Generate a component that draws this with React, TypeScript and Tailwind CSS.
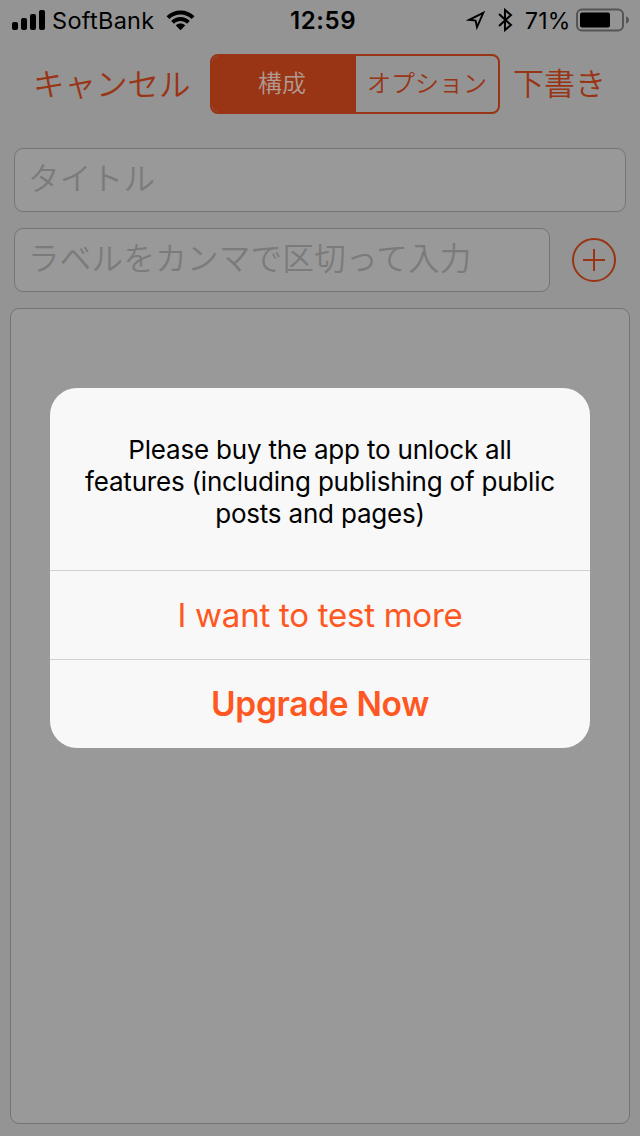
import React from "react";

const latin = "font-['Inter','Noto_Sans_CJK_JP',sans-serif]";
const japanese = "font-['Noto_Sans_CJK_JP',sans-serif]";

function StatusBar() {
  return (
    <div className="flex h-10 items-center pl-3 text-[24px] leading-10 text-black">
      <svg width="34" height="20" viewBox="0 0 34 20" className="shrink-0">
        <rect x="0" y="12" width="6" height="8" rx="2" />
        <rect x="9" y="8" width="6" height="12" rx="2" />
        <rect x="18" y="4" width="6" height="16" rx="2" />
        <rect x="27" y="0" width="6" height="20" rx="2" />
      </svg>
      <span className="ml-[6px] w-[104px] shrink-0 whitespace-nowrap pt-[2px] text-[23.5px] tracking-[0.3px]">SoftBank</span>
      <svg width="29" height="21" viewBox="0 0 29 21" className="ml-[10px] shrink-0">
        <path d="M0.5 6.3C8-1.3 21-1.3 28.5 6.3L25.7 9.1C19.5 3 9.5 3 3.3 9.1Z" />
        <path d="M5.2 11C10.3 5.8 18.7 5.8 23.8 11L21 13.8C17.5 10.2 11.5 10.2 8 13.8Z" />
        <path d="M9.8 15.4C12.4 12.9 16.6 12.9 19.2 15.4L14.5 20.3Z" />
      </svg>
      <span className="ml-[95px] w-[67px] shrink-0 whitespace-nowrap pt-[2px] text-[24px] font-semibold tracking-[0.6px]">12:59</span>
      <svg width="20" height="20" viewBox="0 0 20 20" className="ml-[109px] shrink-0">
        <path d="M3 9.8L17.3 2.8L11 17.2L9.6 10.6Z" fill="none" stroke="#000" strokeWidth="1.9" strokeLinejoin="miter" />
      </svg>
      <svg width="15" height="24" viewBox="0 0 15 24" className="ml-[12px] shrink-0">
        <path d="M1 6L13 17L7 22V2L13 7L1 18" fill="none" stroke="#000" strokeWidth="2" />
      </svg>
      <span className="ml-[12px] w-[47px] shrink-0 whitespace-nowrap pt-[2px] text-[23px] tracking-[0.2px]">71%</span>
      <svg width="54" height="24" viewBox="0 0 54 24" className="ml-[4px] shrink-0">
        <rect x="1" y="1.5" width="46" height="21" rx="5" fill="none" stroke="#555" strokeWidth="2" />
        <rect x="4" y="4.5" width="30" height="15" rx="2" />
        <path d="M50 8.5Q53 9.5 53 12Q53 14.5 50 15.5Z" fill="#555" />
      </svg>
    </div>
  );
}

function Toolbar() {
  return (
    <div className={`flex h-[88px] items-start pt-[14px] text-[#993414] ${japanese}`}>
      <button className="ml-[33px] h-[60px] w-[158px] shrink-0 whitespace-nowrap pb-1 text-left text-[31.5px] font-[350] leading-[56px]">キャンセル</button>
      <div className="ml-[19px] flex h-[60px] w-[290px] shrink-0 overflow-hidden rounded-[8px] border-2 border-[#993414] text-[24px] leading-[52px]">
        <button className="w-[144px] shrink-0 bg-[#993414] pb-1 pr-1 font-[350] text-[#b09a92]">構成</button>
        <button className="flex-1 whitespace-nowrap pb-1 font-[350]">オプション</button>
      </div>
      <button className="ml-[13px] h-[60px] shrink-0 whitespace-nowrap pb-1 text-left text-[31px] font-[350] leading-[56px]">下書き</button>
    </div>
  );
}

function Field({ text }: { text: string }) {
  return (
    <div className={`h-16 min-w-0 flex-1 whitespace-nowrap rounded-[9px] border border-[#747474] bg-[#999] pl-[13px] text-[31.5px] font-[350] leading-[54px] tracking-[0.3px] text-[#7b7b7b] ${japanese}`}>
      {text}
    </div>
  );
}

export default function App() {
  return (
    <div className={`relative flex h-[1136px] w-[640px] flex-col overflow-hidden bg-[#949494] ${latin}`}>
      <StatusBar />
      <Toolbar />
      <div className="flex flex-col gap-4 px-[14px] pt-5">
        <div className="flex">
          <Field text="タイトル" />
        </div>
        <div className="flex items-center pr-[10px]">
          <Field text="ラベルをカンマで区切って入力" />
          <svg width="44" height="44" viewBox="0 0 44 44" className="ml-[22px] shrink-0" fill="none" stroke="#993414" strokeWidth="2">
            <circle cx="22" cy="22" r="21" />
            <path d="M22 11V33M11 22H33" />
          </svg>
        </div>
      </div>
      <div className="mx-[10px] mb-3 mt-4 flex-1 rounded-[9px] border border-[#747474] bg-[#999]" />

      <div className="absolute inset-0 flex items-center justify-center">
        <div className="flex h-[360px] w-[540px] flex-col overflow-hidden rounded-[27px] bg-[#f8f8f8] text-center text-[#ff5722]">
          <p className="h-[182px] whitespace-nowrap pt-[46px] text-[26px] leading-8 tracking-[-0.2px] text-black">
            Please buy the app to unlock all
            <br />
            features (including publishing of public
            <br />
            posts and pages)
          </p>
          <button className="h-[89px] border-t border-[#d0d0d2] text-[33px] leading-[89px] tracking-[-0.25px]">I want to test more</button>
          <button className="h-[89px] border-t border-[#d0d0d2] text-[33.5px] font-semibold leading-[88px] tracking-[-0.3px]">Upgrade Now</button>
        </div>
      </div>
    </div>
  );
}
